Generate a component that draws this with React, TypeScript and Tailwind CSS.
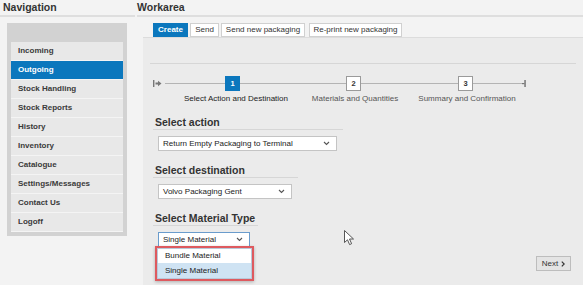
import { ReactNode } from 'react'

const navItems = [
  'Incoming',
  'Outgoing',
  'Stock Handling',
  'Stock Reports',
  'History',
  'Inventory',
  'Catalogue',
  'Settings/Messages',
  'Contact Us',
  'Logoff',
]

function Chevron() {
  return (
    <svg width="7" height="5" viewBox="0 0 7 5" className="shrink-0">
      <path d="M1 1 L3.5 3.5 L6 1" fill="none" stroke="#555" strokeWidth="1.1" />
    </svg>
  )
}

function SelectBox({ value, width, focused }: { value: string; width: string; focused?: boolean }) {
  return (
    <div
      className={`flex h-[15px] items-center justify-between border bg-white pl-[4px] pr-[6px] text-[8px] text-[#222] ${width} ${
        focused ? 'border-[#6a9ccc]' : 'border-[#c4c4c4]'
      }`}
    >
      <span>{value}</span>
      <Chevron />
    </div>
  )
}

function Section({ title, line, children }: { title: string; line: string; children: ReactNode }) {
  return (
    <div className="flex flex-col">
      <div className={`h-[14px] border-b border-[#d6d6d6] pl-[2px] text-[10.5px] font-bold leading-[12px] text-[#333] ${line}`}>
        {title}
      </div>
      <div className="mt-[6px] pl-[5px]">{children}</div>
    </div>
  )
}

function StepBox({ n, active }: { n: number; active?: boolean }) {
  return (
    <div
      className={`flex h-[15px] w-[15px] shrink-0 items-center justify-center border text-[7.5px] font-bold ${
        active ? 'border-[#0b77bd] bg-[#0b77bd] text-white' : 'border-[#9a9a9a] bg-white text-[#333]'
      }`}
    >
      {n}
    </div>
  )
}

function Line({ w }: { w: string }) {
  return <div className={`h-px bg-[#b4b4b4] ${w}`} />
}

export default function App() {
  return (
    <div className="relative flex h-[285px] w-[583px] overflow-hidden bg-[#f3f3f3] font-['Liberation_Sans',Arial,sans-serif]">
      {/* left: navigation */}
      <div className="flex w-[137px] shrink-0 flex-col">
        <div className="h-[17px] w-[135px] border-b-2 border-[#dedede] pl-[3px] text-[10.5px] font-bold leading-[15px] text-[#333]">
          Navigation
        </div>
        <div className="ml-[7px] mt-[6px] w-[120px] bg-[#d2d2d2] px-[4px] pb-[4px] pt-[19px]">
          {navItems.map((item) => (
            <div
              key={item}
              className={`flex h-[19px] items-center border-b border-[#f4f4f4] pl-[7px] text-[8px] font-bold ${
                item === 'Outgoing' ? 'bg-[#0b77bd] text-white' : 'bg-[#e8e8e8] text-[#3a3a3a]'
              }`}
            >
              {item}
            </div>
          ))}
        </div>
      </div>

      {/* right: workarea */}
      <div className="flex flex-1 flex-col">
        <div className="h-[17px] border-b-2 border-[#dedede] text-[10.5px] font-bold leading-[15px] text-[#333]">
          Workarea
        </div>
        <div className="flex gap-[2px] pl-[16px] pt-[6px] text-[8px] text-[#333]">
          <div className="flex h-[14px] w-[35px] items-center justify-center bg-[#0b77bd] font-bold text-white">Create</div>
          <div className="flex h-[14px] w-[29px] items-center justify-center border border-[#d0d0d0] bg-white">Send</div>
          <div className="flex h-[14px] w-[84px] items-center justify-center border border-[#d0d0d0] bg-white">
            Send new packaging
          </div>
          <div className="ml-[2px] flex h-[14px] w-[93px] items-center justify-center border border-[#d0d0d0] bg-white">
            Re-print new packaging
          </div>
        </div>

        <div className="ml-[6px] flex flex-1 flex-col border-t border-[#dcdcdc] bg-[#ebebeb]">
          <div className="mx-[7px] mt-[25px] h-px bg-[#d6d6d6]" />

          {/* stepper */}
          <div className="ml-[10px] mt-[12px] flex items-center">
            <svg width="9" height="7" viewBox="0 0 9 7" className="shrink-0">
              <rect x="0" y="0" width="1.4" height="7" fill="#777" />
              <path d="M2.5 2.6 H5 V0.8 L8.5 3.5 L5 6.2 V4.4 H2.5 Z" fill="#777" />
            </svg>
            <div className="ml-[3px]" />
            <Line w="w-[60px]" />
            <StepBox n={1} active />
            <Line w="w-[106px]" />
            <StepBox n={2} />
            <Line w="w-[97px]" />
            <StepBox n={3} />
            <Line w="w-[49px]" />
            <svg width="4" height="7" viewBox="0 0 4 7" className="shrink-0">
              <rect x="0" y="3" width="2.5" height="1.2" fill="#777" />
              <rect x="2.3" y="0" width="1.5" height="7" fill="#777" />
            </svg>
          </div>
          <div className="mt-[3px] flex text-[8px] leading-[10px]">
            <div className="ml-[33px] w-[120px] text-center text-[#222]">Select Action and Destination</div>
            <div className="ml-[9px] w-[100px] text-center text-[#555]">Materials and Quantities</div>
            <div className="ml-[7px] w-[110px] text-center text-[#555]">Summary and Confirmation</div>
          </div>

          {/* form */}
          <div className="ml-[10px] mt-[12px] flex flex-col gap-[13px]">
            <Section title="Select action" line="w-[190px]">
              <SelectBox value="Return Empty Packaging to Terminal" width="w-[179px]" />
            </Section>
            <Section title="Select destination" line="w-[145px]">
              <SelectBox value="Volvo Packaging Gent" width="w-[134px]" />
            </Section>
            <Section title="Select Material Type" line="w-[105px]">
              <div className="relative">
                <SelectBox value="Single Material" width="w-[92px]" focused />
                <div className="absolute left-[-3px] top-[14px] w-[99px] border-2 border-[#de5a5f] bg-white shadow-[0_1px_3px_rgba(0,0,0,0.25)]">
                  <div className="border border-[#b9c9d9]">
                    <div className="flex h-[14px] items-center pl-[7px] text-[8px] text-[#222]">Bundle Material</div>
                    <div className="flex h-[15px] items-center bg-[#cfe3f3] pl-[7px] text-[8px] text-[#222]">
                      Single Material
                    </div>
                  </div>
                </div>
              </div>
            </Section>
          </div>

          <div className="mr-[12px] mt-[9px] flex justify-end">
            <div className="flex h-[15px] w-[35px] items-center justify-center gap-[3px] border border-[#bdbdbd] bg-[#e4e4e4] text-[8px] text-[#333]">
              Next
              <svg width="4" height="6" viewBox="0 0 4 6">
                <path d="M0.8 0.6 L3.2 3 L0.8 5.4" fill="none" stroke="#333" strokeWidth="1.2" />
              </svg>
            </div>
          </div>
        </div>
      </div>

      {/* mouse cursor */}
      <svg width="11" height="16" viewBox="0 0 11 16" className="absolute left-[344px] top-[230px]">
        <path d="M0.5 0.5 V12.5 L3.5 9.8 L5.6 14.6 L7.6 13.7 L5.5 9 H9.5 Z" fill="white" stroke="#444" strokeWidth="0.9" strokeLinejoin="round" />
      </svg>
    </div>
  )
}
